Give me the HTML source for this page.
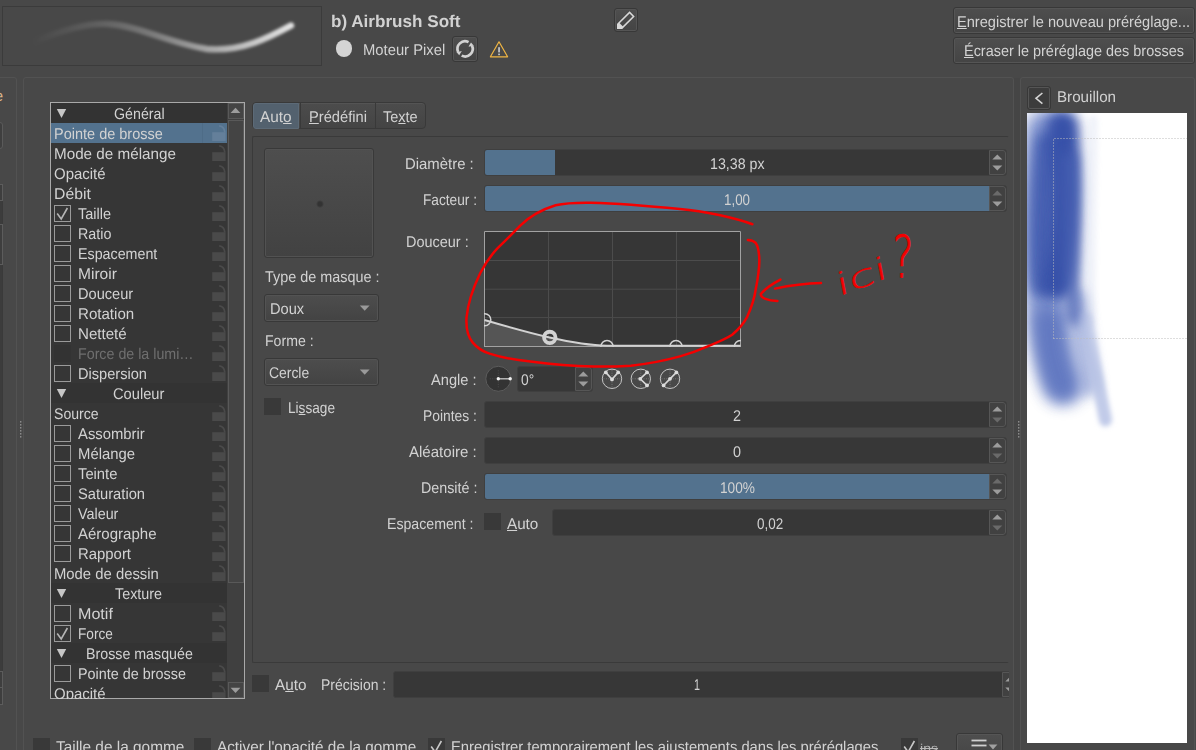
<!DOCTYPE html>
<html lang="fr"><head><meta charset="utf-8"><title>Éditeur de brosses</title>
<style>
html,body{margin:0;padding:0}
body{text-rendering:geometricPrecision;width:1196px;height:750px;overflow:hidden;background:#484848;position:relative;font-family:"Liberation Sans",sans-serif;color:#d2d2d2}
.abs{position:absolute;display:block}
.t{position:absolute;white-space:nowrap;line-height:20px;transform-origin:0 0}
.t2{position:absolute;white-space:nowrap;line-height:20px}
.t u{text-decoration-thickness:1px;text-underline-offset:1.2px}
.frame{position:absolute;box-sizing:border-box;border:1px solid #525252;border-radius:3px}
.cb{width:17px;height:17px;box-sizing:border-box;border:1px solid #9a9a9a}
.chk{position:absolute;width:17px;height:17px;background:#393939}
.sbb{box-sizing:border-box;border:1px solid #595959;background:#444444}
.btn{position:absolute;box-sizing:border-box;border:1px solid #383838;border-radius:3px;background:linear-gradient(#4e4e4e,#444444);box-shadow:inset 0 0 0 1px #555555}
.sl{box-sizing:border-box;border:1px solid #3f3f3f;border-radius:3px;background:#373737;overflow:hidden}
.fill{background:#53728e}
.spn{width:17px;box-sizing:border-box;border:1px solid #565656;border-radius:0 3px 3px 0;background:#414141}
.combo{position:absolute;box-sizing:border-box;border:1px solid #383838;border-radius:3px;background:linear-gradient(#4d4d4d,#434343);box-shadow:inset 0 0 0 1px #535353}
</style></head><body>

<div class="frame" style="left:-6px;top:77px;width:23px;height:700px"></div>
<div class="frame" style="left:23px;top:77px;width:991px;height:700px"></div>
<div class="frame" style="left:1020px;top:77px;width:175px;height:700px"></div>
<div class="abs" style="left:1014px;top:78px;width:6px;height:672px;background:#454545"></div>
<svg class="abs" style="left:19px;top:420px" width="4" height="19" viewBox="0 0 4 19"><rect x="1" y="1" width="1.4" height="1.6" fill="#8a8a8a"/><rect x="1" y="4" width="1.4" height="1.6" fill="#8a8a8a"/><rect x="1" y="7" width="1.4" height="1.6" fill="#8a8a8a"/><rect x="1" y="10" width="1.4" height="1.6" fill="#8a8a8a"/><rect x="1" y="13" width="1.4" height="1.6" fill="#8a8a8a"/><rect x="1" y="16" width="1.4" height="1.6" fill="#8a8a8a"/></svg>
<svg class="abs" style="left:1017px;top:420px" width="4" height="19" viewBox="0 0 4 19"><rect x="1" y="1" width="1.4" height="1.6" fill="#8a8a8a"/><rect x="1" y="4" width="1.4" height="1.6" fill="#8a8a8a"/><rect x="1" y="7" width="1.4" height="1.6" fill="#8a8a8a"/><rect x="1" y="10" width="1.4" height="1.6" fill="#8a8a8a"/><rect x="1" y="13" width="1.4" height="1.6" fill="#8a8a8a"/><rect x="1" y="16" width="1.4" height="1.6" fill="#8a8a8a"/></svg>
<div class="abs" style="left:-6px;top:121.5px;width:9px;height:27px;box-sizing:border-box;border:1px solid #5a5a5a;border-radius:3px;background:#3f3f3f"></div>
<div class="abs" style="left:-6px;top:184px;width:9px;height:521px;box-sizing:border-box;border:1px solid #3a3a3a;background:#3c3c3c"></div>
<div class="abs" style="left:-6px;top:184px;width:9px;height:17px;box-sizing:border-box;border:1px solid #5c5c5c;background:#3e3e3e"></div>
<div class="abs" style="left:-6px;top:224px;width:9px;height:41px;box-sizing:border-box;border:1px solid #5c5c5c;background:#3e3e3e"></div>
<div class="abs" style="left:-6px;top:671px;width:9px;height:17px;box-sizing:border-box;border:1px solid #5c5c5c;background:#3e3e3e"></div>
<div class="abs" style="left:-6px;top:687px;width:9px;height:18px;box-sizing:border-box;border:1px solid #5c5c5c;background:#3e3e3e"></div>
<span class="t2" style="left:-5.5px;top:87px;font-size:15.5px;color:#d8b48a">e</span>
<span class="t2" style="left:-2.5px;top:738px;font-size:15.5px;color:#e8e8e8">.</span>
<svg class="abs" style="left:2px;top:6px" width="320" height="60" viewBox="0 0 320 60">
<defs><linearGradient id="sg" gradientUnits="userSpaceOnUse" x1="30" y1="0" x2="292" y2="0"><stop offset="0" stop-color="#fff" stop-opacity="0"/><stop offset="0.25" stop-color="#fff" stop-opacity="0.13"/><stop offset="0.45" stop-color="#fff" stop-opacity="0.27"/><stop offset="0.7" stop-color="#fff" stop-opacity="0.55"/><stop offset="1" stop-color="#fff" stop-opacity="0.86"/></linearGradient>
<filter id="sb" filterUnits="userSpaceOnUse" x="0" y="0" width="320" height="60"><feGaussianBlur stdDeviation="1.5"/></filter></defs>
<rect x="0.5" y="0.5" width="319" height="59" fill="#484848" stroke="#3b3b3b"/>
<path d="M33 35.5 C60 24 85 17 106 18 C135 19.5 170 38 205 43 C240 46 268 31 289 19.5" fill="none" stroke="url(#sg)" stroke-width="6.4" stroke-linecap="round" filter="url(#sb)"/>
</svg>
<div class="abs" style="left:335.8px;top:40.4px;width:16.6px;height:16.6px;border-radius:50%;background:#d4d4d4"></div>
<div class="btn" style="left:452px;top:36px;width:26px;height:26px"></div>
<svg class="abs" style="left:452px;top:36px" width="26" height="26" viewBox="0 0 26 26"><g fill="none" stroke="#d2d2d2" stroke-width="2.7">
<path d="M19.99 9.64 A7.6 7.6 0 0 1 9.65 19.62"/><path d="M6.21 16.06 A7.6 7.6 0 0 1 16.55 6.08"/></g>
<path d="M18.97 6.56 L16.41 10.78 L21.63 9.4 Z" fill="#d2d2d2"/><path d="M7.23 19.14 L9.79 14.92 L4.57 16.3 Z" fill="#d2d2d2"/></svg>
<svg class="abs" style="left:488px;top:38px" width="22" height="22" viewBox="0 0 22 22"><path d="M11 3.8 L19.6 18.8 L2.4 18.8 Z" fill="none" stroke="#f0b542" stroke-width="1.2" stroke-linejoin="round"/><rect x="10.3" y="9.2" width="1.5" height="5.2" fill="#dcdcdc"/><rect x="10.3" y="15.6" width="1.5" height="1.6" fill="#dcdcdc"/></svg>
<div class="btn" style="left:614px;top:8px;width:24px;height:24px"></div>
<svg class="abs" style="left:614px;top:8px" width="24" height="24" viewBox="0 0 24 24"><path fill-rule="evenodd" fill="#d8d8d8" d="M15.6 3.3 L20.7 8.4 L8.7 20.4 L8.4 21 L3 21 L3 15.9 L3.6 15.3 Z M15.6 5.42 L5.72 15.3 L8.7 18.28 L18.58 8.4 Z"/></svg>
<div class="btn" style="left:953px;top:7px;width:242px;height:27px"></div>
<div class="btn" style="left:953px;top:37px;width:242px;height:27px"></div>
<div class="abs" style="left:50px;top:102px;width:195px;height:597px;box-sizing:border-box;border:1px solid #a9a9a9;background:#363636;overflow:hidden">
<div class="abs" style="left:0;top:0px;width:176px;height:20px;background:#333333"></div>
<svg class="abs" style="left:5px;top:5px" width="12" height="11" viewBox="0 0 12 11"><path d="M0.8 1 L10.2 1 L5.5 10 Z" fill="#c6c6c6"/></svg>
<div class="abs" style="left:0;top:20px;width:176px;height:20px;background:#53728e"></div>
<div class="abs" style="left:151px;top:20px;width:1px;height:20px;background:#4e6c87"></div>
<svg class="abs" style="left:160px;top:21px" width="16" height="18" viewBox="0 0 16 18"><rect x="1.2" y="8.2" width="13.4" height="8.8" fill="#647f9a"/><path d="M8.2 1.8 C12 2.2 13.6 4.6 13.8 8.4" fill="none" stroke="#647f9a" stroke-width="1.8"/></svg>
<svg class="abs" style="left:160px;top:41px" width="16" height="18" viewBox="0 0 16 18"><rect x="1.2" y="8.2" width="13.4" height="8.8" fill="#4a4a4a"/><path d="M8.2 1.8 C12 2.2 13.6 4.6 13.8 8.4" fill="none" stroke="#4a4a4a" stroke-width="1.8"/></svg>
<svg class="abs" style="left:160px;top:61px" width="16" height="18" viewBox="0 0 16 18"><rect x="1.2" y="8.2" width="13.4" height="8.8" fill="#4a4a4a"/><path d="M8.2 1.8 C12 2.2 13.6 4.6 13.8 8.4" fill="none" stroke="#4a4a4a" stroke-width="1.8"/></svg>
<svg class="abs" style="left:160px;top:81px" width="16" height="18" viewBox="0 0 16 18"><rect x="1.2" y="8.2" width="13.4" height="8.8" fill="#4a4a4a"/><path d="M8.2 1.8 C12 2.2 13.6 4.6 13.8 8.4" fill="none" stroke="#4a4a4a" stroke-width="1.8"/></svg>
<div class="abs cb" style="left:3px;top:102px"></div>
<svg class="abs" style="left:3px;top:102px" width="17" height="17" viewBox="0 0 17 17"><path d="M3.2 8.6 L7.2 14 L13.4 3" fill="none" stroke="#b4b4b4" stroke-width="1.6"/></svg>
<svg class="abs" style="left:160px;top:101px" width="16" height="18" viewBox="0 0 16 18"><rect x="1.2" y="8.2" width="13.4" height="8.8" fill="#4a4a4a"/><path d="M8.2 1.8 C12 2.2 13.6 4.6 13.8 8.4" fill="none" stroke="#4a4a4a" stroke-width="1.8"/></svg>
<div class="abs cb" style="left:3px;top:122px"></div>
<svg class="abs" style="left:160px;top:121px" width="16" height="18" viewBox="0 0 16 18"><rect x="1.2" y="8.2" width="13.4" height="8.8" fill="#4a4a4a"/><path d="M8.2 1.8 C12 2.2 13.6 4.6 13.8 8.4" fill="none" stroke="#4a4a4a" stroke-width="1.8"/></svg>
<div class="abs cb" style="left:3px;top:142px"></div>
<svg class="abs" style="left:160px;top:141px" width="16" height="18" viewBox="0 0 16 18"><rect x="1.2" y="8.2" width="13.4" height="8.8" fill="#4a4a4a"/><path d="M8.2 1.8 C12 2.2 13.6 4.6 13.8 8.4" fill="none" stroke="#4a4a4a" stroke-width="1.8"/></svg>
<div class="abs cb" style="left:3px;top:162px"></div>
<svg class="abs" style="left:160px;top:161px" width="16" height="18" viewBox="0 0 16 18"><rect x="1.2" y="8.2" width="13.4" height="8.8" fill="#4a4a4a"/><path d="M8.2 1.8 C12 2.2 13.6 4.6 13.8 8.4" fill="none" stroke="#4a4a4a" stroke-width="1.8"/></svg>
<div class="abs cb" style="left:3px;top:182px"></div>
<svg class="abs" style="left:160px;top:181px" width="16" height="18" viewBox="0 0 16 18"><rect x="1.2" y="8.2" width="13.4" height="8.8" fill="#4a4a4a"/><path d="M8.2 1.8 C12 2.2 13.6 4.6 13.8 8.4" fill="none" stroke="#4a4a4a" stroke-width="1.8"/></svg>
<div class="abs cb" style="left:3px;top:202px"></div>
<svg class="abs" style="left:160px;top:201px" width="16" height="18" viewBox="0 0 16 18"><rect x="1.2" y="8.2" width="13.4" height="8.8" fill="#4a4a4a"/><path d="M8.2 1.8 C12 2.2 13.6 4.6 13.8 8.4" fill="none" stroke="#4a4a4a" stroke-width="1.8"/></svg>
<div class="abs cb" style="left:3px;top:222px"></div>
<svg class="abs" style="left:160px;top:221px" width="16" height="18" viewBox="0 0 16 18"><rect x="1.2" y="8.2" width="13.4" height="8.8" fill="#4a4a4a"/><path d="M8.2 1.8 C12 2.2 13.6 4.6 13.8 8.4" fill="none" stroke="#4a4a4a" stroke-width="1.8"/></svg>
<div class="abs" style="left:3px;top:242px;width:17px;height:17px;background:#333333"></div>
<svg class="abs" style="left:160px;top:241px" width="16" height="18" viewBox="0 0 16 18"><rect x="1.2" y="8.2" width="13.4" height="8.8" fill="#4a4a4a"/><path d="M8.2 1.8 C12 2.2 13.6 4.6 13.8 8.4" fill="none" stroke="#4a4a4a" stroke-width="1.8"/></svg>
<div class="abs cb" style="left:3px;top:262px"></div>
<svg class="abs" style="left:160px;top:261px" width="16" height="18" viewBox="0 0 16 18"><rect x="1.2" y="8.2" width="13.4" height="8.8" fill="#4a4a4a"/><path d="M8.2 1.8 C12 2.2 13.6 4.6 13.8 8.4" fill="none" stroke="#4a4a4a" stroke-width="1.8"/></svg>
<div class="abs" style="left:0;top:280px;width:176px;height:20px;background:#333333"></div>
<svg class="abs" style="left:5px;top:285px" width="12" height="11" viewBox="0 0 12 11"><path d="M0.8 1 L10.2 1 L5.5 10 Z" fill="#c6c6c6"/></svg>
<svg class="abs" style="left:160px;top:301px" width="16" height="18" viewBox="0 0 16 18"><rect x="1.2" y="8.2" width="13.4" height="8.8" fill="#4a4a4a"/><path d="M8.2 1.8 C12 2.2 13.6 4.6 13.8 8.4" fill="none" stroke="#4a4a4a" stroke-width="1.8"/></svg>
<div class="abs cb" style="left:3px;top:322px"></div>
<svg class="abs" style="left:160px;top:321px" width="16" height="18" viewBox="0 0 16 18"><rect x="1.2" y="8.2" width="13.4" height="8.8" fill="#4a4a4a"/><path d="M8.2 1.8 C12 2.2 13.6 4.6 13.8 8.4" fill="none" stroke="#4a4a4a" stroke-width="1.8"/></svg>
<div class="abs cb" style="left:3px;top:342px"></div>
<svg class="abs" style="left:160px;top:341px" width="16" height="18" viewBox="0 0 16 18"><rect x="1.2" y="8.2" width="13.4" height="8.8" fill="#4a4a4a"/><path d="M8.2 1.8 C12 2.2 13.6 4.6 13.8 8.4" fill="none" stroke="#4a4a4a" stroke-width="1.8"/></svg>
<div class="abs cb" style="left:3px;top:362px"></div>
<svg class="abs" style="left:160px;top:361px" width="16" height="18" viewBox="0 0 16 18"><rect x="1.2" y="8.2" width="13.4" height="8.8" fill="#4a4a4a"/><path d="M8.2 1.8 C12 2.2 13.6 4.6 13.8 8.4" fill="none" stroke="#4a4a4a" stroke-width="1.8"/></svg>
<div class="abs cb" style="left:3px;top:382px"></div>
<svg class="abs" style="left:160px;top:381px" width="16" height="18" viewBox="0 0 16 18"><rect x="1.2" y="8.2" width="13.4" height="8.8" fill="#4a4a4a"/><path d="M8.2 1.8 C12 2.2 13.6 4.6 13.8 8.4" fill="none" stroke="#4a4a4a" stroke-width="1.8"/></svg>
<div class="abs cb" style="left:3px;top:402px"></div>
<svg class="abs" style="left:160px;top:401px" width="16" height="18" viewBox="0 0 16 18"><rect x="1.2" y="8.2" width="13.4" height="8.8" fill="#4a4a4a"/><path d="M8.2 1.8 C12 2.2 13.6 4.6 13.8 8.4" fill="none" stroke="#4a4a4a" stroke-width="1.8"/></svg>
<div class="abs cb" style="left:3px;top:422px"></div>
<svg class="abs" style="left:160px;top:421px" width="16" height="18" viewBox="0 0 16 18"><rect x="1.2" y="8.2" width="13.4" height="8.8" fill="#4a4a4a"/><path d="M8.2 1.8 C12 2.2 13.6 4.6 13.8 8.4" fill="none" stroke="#4a4a4a" stroke-width="1.8"/></svg>
<div class="abs cb" style="left:3px;top:442px"></div>
<svg class="abs" style="left:160px;top:441px" width="16" height="18" viewBox="0 0 16 18"><rect x="1.2" y="8.2" width="13.4" height="8.8" fill="#4a4a4a"/><path d="M8.2 1.8 C12 2.2 13.6 4.6 13.8 8.4" fill="none" stroke="#4a4a4a" stroke-width="1.8"/></svg>
<svg class="abs" style="left:160px;top:461px" width="16" height="18" viewBox="0 0 16 18"><rect x="1.2" y="8.2" width="13.4" height="8.8" fill="#4a4a4a"/><path d="M8.2 1.8 C12 2.2 13.6 4.6 13.8 8.4" fill="none" stroke="#4a4a4a" stroke-width="1.8"/></svg>
<div class="abs" style="left:0;top:480px;width:176px;height:20px;background:#333333"></div>
<svg class="abs" style="left:5px;top:485px" width="12" height="11" viewBox="0 0 12 11"><path d="M0.8 1 L10.2 1 L5.5 10 Z" fill="#c6c6c6"/></svg>
<div class="abs cb" style="left:3px;top:502px"></div>
<svg class="abs" style="left:160px;top:501px" width="16" height="18" viewBox="0 0 16 18"><rect x="1.2" y="8.2" width="13.4" height="8.8" fill="#4a4a4a"/><path d="M8.2 1.8 C12 2.2 13.6 4.6 13.8 8.4" fill="none" stroke="#4a4a4a" stroke-width="1.8"/></svg>
<div class="abs cb" style="left:3px;top:522px"></div>
<svg class="abs" style="left:3px;top:522px" width="17" height="17" viewBox="0 0 17 17"><path d="M3.2 8.6 L7.2 14 L13.4 3" fill="none" stroke="#b4b4b4" stroke-width="1.6"/></svg>
<svg class="abs" style="left:160px;top:521px" width="16" height="18" viewBox="0 0 16 18"><rect x="1.2" y="8.2" width="13.4" height="8.8" fill="#4a4a4a"/><path d="M8.2 1.8 C12 2.2 13.6 4.6 13.8 8.4" fill="none" stroke="#4a4a4a" stroke-width="1.8"/></svg>
<div class="abs" style="left:0;top:540px;width:176px;height:20px;background:#333333"></div>
<svg class="abs" style="left:5px;top:545px" width="12" height="11" viewBox="0 0 12 11"><path d="M0.8 1 L10.2 1 L5.5 10 Z" fill="#c6c6c6"/></svg>
<div class="abs cb" style="left:3px;top:562px"></div>
<svg class="abs" style="left:160px;top:561px" width="16" height="18" viewBox="0 0 16 18"><rect x="1.2" y="8.2" width="13.4" height="8.8" fill="#4a4a4a"/><path d="M8.2 1.8 C12 2.2 13.6 4.6 13.8 8.4" fill="none" stroke="#4a4a4a" stroke-width="1.8"/></svg>
<svg class="abs" style="left:160px;top:581px" width="16" height="18" viewBox="0 0 16 18"><rect x="1.2" y="8.2" width="13.4" height="8.8" fill="#4a4a4a"/><path d="M8.2 1.8 C12 2.2 13.6 4.6 13.8 8.4" fill="none" stroke="#4a4a4a" stroke-width="1.8"/></svg>
<div class="abs" style="left:176px;top:0;width:17px;height:595px;background:#404040"></div>
<div class="abs sbb" style="left:177px;top:0;width:16px;height:16px"></div>
<svg class="abs" style="left:179px;top:4px" width="12" height="7" viewBox="0 0 12 7"><path d="M0.6 6 L10.4 6 L5.5 0.8 Z" fill="#9c9c9c"/></svg>
<div class="abs sbb" style="left:177px;top:17px;width:16px;height:463px"></div>
<div class="abs sbb" style="left:177px;top:579px;width:16px;height:16px"></div>
<svg class="abs" style="left:179px;top:584px" width="12" height="7" viewBox="0 0 12 7"><path d="M0.6 0.8 L10.4 0.8 L5.5 6 Z" fill="#9c9c9c"/></svg>
</div>
<div class="abs" style="left:252px;top:102px;width:174px;height:27px;box-sizing:border-box;border:1px solid #393939;border-radius:4px;background:linear-gradient(#4c4c4c,#444444);box-shadow:inset 0 1px 0 #545454;overflow:hidden"><div class="abs" style="left:47px;top:0;width:1px;height:25px;background:#393939"></div><div class="abs" style="left:122px;top:0;width:1px;height:25px;background:#393939"></div></div>
<div class="abs" style="left:252.5px;top:102.5px;width:46.8px;height:26px;box-sizing:border-box;border:1px solid #5c6a77;border-radius:3px 0 0 3px;background:#53616e"></div>
<div class="abs" style="left:252px;top:136px;width:757px;height:527px;box-sizing:border-box;border:1px solid #3a3a3a;border-right-color:transparent;border-radius:2px"></div>
<div class="abs" style="left:264px;top:148px;width:110px;height:110px;box-sizing:border-box;border:1px solid #393939;border-radius:3px;background:linear-gradient(#4e4e4e,#424242);box-shadow:inset 0 0 0 1px #525252"></div>
<div class="abs" style="left:315.5px;top:199.5px;width:8px;height:8px;border-radius:50%;background:radial-gradient(#333 35%,rgba(51,51,51,0) 72%)"></div>
<div class="combo" style="left:264px;top:294px;width:115px;height:28px"></div>
<svg class="abs" style="left:359px;top:305px" width="12" height="7" viewBox="0 0 12 7"><path d="M0.8 0.5 L10.6 0.5 L5.7 5.8 Z" fill="#9a9a9a"/></svg>
<div class="combo" style="left:264px;top:358px;width:115px;height:28px"></div>
<svg class="abs" style="left:359px;top:369px" width="12" height="7" viewBox="0 0 12 7"><path d="M0.8 0.5 L10.6 0.5 L5.7 5.8 Z" fill="#9a9a9a"/></svg>
<div class="chk" style="left:264px;top:398px"></div>
<div class="abs sl" style="left:484px;top:149px;width:523px;height:27px"><div class="abs fill" style="left:0;top:0;width:70px;height:25px"></div><div class="abs spn" style="right:0;top:0;height:25px"></div><svg class="abs" style="right:3px;top:4.2px" width="11" height="6" viewBox="0 0 11 6"><path d="M0.3 5.6 L10.3 5.6 L5.3 0.4 Z" fill="#9c9c9c"/></svg><svg class="abs" style="right:3px;top:14.8px" width="11" height="6" viewBox="0 0 11 6"><path d="M0.3 0.4 L10.3 0.4 L5.3 5.6 Z" fill="#9c9c9c"/></svg></div>
<div class="abs sl" style="left:484px;top:185px;width:523px;height:27px"><div class="abs fill" style="left:0;top:0;width:505px;height:25px"></div><div class="abs spn" style="right:0;top:0;height:25px"></div><svg class="abs" style="right:3px;top:4.2px" width="11" height="6" viewBox="0 0 11 6"><path d="M0.3 5.6 L10.3 5.6 L5.3 0.4 Z" fill="#6a6a6a"/></svg><svg class="abs" style="right:3px;top:14.8px" width="11" height="6" viewBox="0 0 11 6"><path d="M0.3 0.4 L10.3 0.4 L5.3 5.6 Z" fill="#9c9c9c"/></svg></div>
<div class="abs sl" style="left:484px;top:401px;width:523px;height:27px"><div class="abs spn" style="right:0;top:0;height:25px"></div><svg class="abs" style="right:3px;top:4.2px" width="11" height="6" viewBox="0 0 11 6"><path d="M0.3 5.6 L10.3 5.6 L5.3 0.4 Z" fill="#9c9c9c"/></svg><svg class="abs" style="right:3px;top:14.8px" width="11" height="6" viewBox="0 0 11 6"><path d="M0.3 0.4 L10.3 0.4 L5.3 5.6 Z" fill="#6a6a6a"/></svg></div>
<div class="abs sl" style="left:484px;top:437px;width:523px;height:27px"><div class="abs spn" style="right:0;top:0;height:25px"></div><svg class="abs" style="right:3px;top:4.2px" width="11" height="6" viewBox="0 0 11 6"><path d="M0.3 5.6 L10.3 5.6 L5.3 0.4 Z" fill="#9c9c9c"/></svg><svg class="abs" style="right:3px;top:14.8px" width="11" height="6" viewBox="0 0 11 6"><path d="M0.3 0.4 L10.3 0.4 L5.3 5.6 Z" fill="#6a6a6a"/></svg></div>
<div class="abs sl" style="left:484px;top:473px;width:523px;height:27px"><div class="abs fill" style="left:0;top:0;width:505px;height:25px"></div><div class="abs spn" style="right:0;top:0;height:25px"></div><svg class="abs" style="right:3px;top:4.2px" width="11" height="6" viewBox="0 0 11 6"><path d="M0.3 5.6 L10.3 5.6 L5.3 0.4 Z" fill="#6a6a6a"/></svg><svg class="abs" style="right:3px;top:14.8px" width="11" height="6" viewBox="0 0 11 6"><path d="M0.3 0.4 L10.3 0.4 L5.3 5.6 Z" fill="#9c9c9c"/></svg></div>
<div class="chk" style="left:484px;top:513px"></div>
<div class="abs sl" style="left:552px;top:509px;width:455px;height:27px"><div class="abs spn" style="right:0;top:0;height:25px"></div><svg class="abs" style="right:3px;top:4.2px" width="11" height="6" viewBox="0 0 11 6"><path d="M0.3 5.6 L10.3 5.6 L5.3 0.4 Z" fill="#9c9c9c"/></svg><svg class="abs" style="right:3px;top:14.8px" width="11" height="6" viewBox="0 0 11 6"><path d="M0.3 0.4 L10.3 0.4 L5.3 5.6 Z" fill="#6a6a6a"/></svg></div>
<div class="chk" style="left:252px;top:675px"></div>
<div class="abs" style="left:393px;top:671px;width:616px;height:27px;overflow:hidden"><div class="abs sl"  style="left:0px;top:0px;width:627px;height:27px"><div class="abs spn" style="right:0;top:0;height:25px"></div><svg class="abs" style="right:3px;top:4.2px" width="11" height="6" viewBox="0 0 11 6"><path d="M0.3 5.6 L10.3 5.6 L5.3 0.4 Z" fill="#9c9c9c"/></svg><svg class="abs" style="right:3px;top:14.8px" width="11" height="6" viewBox="0 0 11 6"><path d="M0.3 0.4 L10.3 0.4 L5.3 5.6 Z" fill="#9c9c9c"/></svg></div></div>
<svg class="abs" style="left:470px;top:220px" width="290" height="140" viewBox="470 220 290 140">
<defs><clipPath id="cc"><rect x="484" y="231" width="257" height="116"/></clipPath></defs>
<rect x="484" y="231" width="257" height="116" fill="#363636"/>
<g clip-path="url(#cc)">
<path d="M484.5 320 C505 326 528 332.5 549.5 337.5 C570 342 590 345.4 607 345.8 L740.5 345.8 L740.5 347 L484.5 347 Z" fill="#555555"/>
<g stroke="#4c4c4c" stroke-width="1"><path d="M548.5 231V347M612.5 231V347M676.5 231V347M484 260.5H741M484 289.2H741M484 317.6H741"/></g>
<path d="M484.5 347 V231.5 H740.5 V347" fill="none" stroke="#a2a2a2" stroke-width="1"/>
<path d="M484 346.5 H741" fill="none" stroke="#a2a2a2" stroke-width="1"/>
<path d="M484.5 320 C505 326 528 332.5 549.5 337.5 C570 342 590 345.4 607 345.8 L740.5 345.8" fill="none" stroke="#d2d2d2" stroke-width="2"/>
<g fill="none" stroke="#d2d2d2" stroke-width="1.5"><circle cx="484.8" cy="319.8" r="6"/><circle cx="607" cy="346.5" r="6.1"/><circle cx="676" cy="346.5" r="6.1"/><circle cx="740.5" cy="346.5" r="6.1"/></g>
<circle cx="549.8" cy="337.4" r="5.7" fill="none" stroke="#d2d2d2" stroke-width="3.9"/>
</g>
</svg>
<svg class="abs" style="left:480px;top:360px" width="215" height="40" viewBox="480 360 215 40"><circle cx="498.3" cy="378.8" r="12.5" fill="#333333" stroke="#5c5c5c" stroke-width="1"/><rect x="501.0" y="378.3" width="1" height="1" fill="#4b4b4b"/><rect x="494.6" y="378.3" width="1" height="1" fill="#4b4b4b"/><rect x="497.8" y="381.5" width="1" height="1" fill="#4b4b4b"/><rect x="497.8" y="375.1" width="1" height="1" fill="#4b4b4b"/><rect x="503.4" y="378.3" width="1" height="1" fill="#4b4b4b"/><rect x="492.2" y="378.3" width="1" height="1" fill="#4b4b4b"/><rect x="497.8" y="383.9" width="1" height="1" fill="#4b4b4b"/><rect x="497.8" y="372.7" width="1" height="1" fill="#4b4b4b"/><rect x="505.8" y="378.3" width="1" height="1" fill="#4b4b4b"/><rect x="489.8" y="378.3" width="1" height="1" fill="#4b4b4b"/><rect x="497.8" y="386.3" width="1" height="1" fill="#4b4b4b"/><rect x="497.8" y="370.3" width="1" height="1" fill="#4b4b4b"/><path d="M498.3 378.8 H510" stroke="#c8c8c8" stroke-width="1.3"/><circle cx="498.3" cy="378.8" r="1.7" fill="#f0f0f0"/><circle cx="510.2" cy="378.8" r="1.7" fill="#f0f0f0"/><g fill="none" stroke="#c4c4c4" stroke-width="1"><circle cx="612" cy="378.8" r="9.7"/><circle cx="640.8" cy="378.8" r="9.7"/><circle cx="670" cy="378.8" r="9.7"/></g><rect x="614.7" y="378.3" width="1" height="1" fill="#7a7a7a"/><rect x="608.3" y="378.3" width="1" height="1" fill="#7a7a7a"/><rect x="611.5" y="381.5" width="1" height="1" fill="#7a7a7a"/><rect x="611.5" y="375.1" width="1" height="1" fill="#7a7a7a"/><rect x="617.1" y="378.3" width="1" height="1" fill="#7a7a7a"/><rect x="605.9" y="378.3" width="1" height="1" fill="#7a7a7a"/><rect x="611.5" y="383.9" width="1" height="1" fill="#7a7a7a"/><rect x="611.5" y="372.7" width="1" height="1" fill="#7a7a7a"/><rect x="619.5" y="378.3" width="1" height="1" fill="#7a7a7a"/><rect x="603.5" y="378.3" width="1" height="1" fill="#7a7a7a"/><rect x="611.5" y="386.3" width="1" height="1" fill="#7a7a7a"/><rect x="611.5" y="370.3" width="1" height="1" fill="#7a7a7a"/><rect x="643.5" y="378.3" width="1" height="1" fill="#7a7a7a"/><rect x="637.1" y="378.3" width="1" height="1" fill="#7a7a7a"/><rect x="640.3" y="381.5" width="1" height="1" fill="#7a7a7a"/><rect x="640.3" y="375.1" width="1" height="1" fill="#7a7a7a"/><rect x="645.9" y="378.3" width="1" height="1" fill="#7a7a7a"/><rect x="634.7" y="378.3" width="1" height="1" fill="#7a7a7a"/><rect x="640.3" y="383.9" width="1" height="1" fill="#7a7a7a"/><rect x="640.3" y="372.7" width="1" height="1" fill="#7a7a7a"/><rect x="648.3" y="378.3" width="1" height="1" fill="#7a7a7a"/><rect x="632.3" y="378.3" width="1" height="1" fill="#7a7a7a"/><rect x="640.3" y="386.3" width="1" height="1" fill="#7a7a7a"/><rect x="640.3" y="370.3" width="1" height="1" fill="#7a7a7a"/><rect x="672.7" y="378.3" width="1" height="1" fill="#7a7a7a"/><rect x="666.3" y="378.3" width="1" height="1" fill="#7a7a7a"/><rect x="669.5" y="381.5" width="1" height="1" fill="#7a7a7a"/><rect x="669.5" y="375.1" width="1" height="1" fill="#7a7a7a"/><rect x="675.1" y="378.3" width="1" height="1" fill="#7a7a7a"/><rect x="663.9" y="378.3" width="1" height="1" fill="#7a7a7a"/><rect x="669.5" y="383.9" width="1" height="1" fill="#7a7a7a"/><rect x="669.5" y="372.7" width="1" height="1" fill="#7a7a7a"/><rect x="677.5" y="378.3" width="1" height="1" fill="#7a7a7a"/><rect x="661.5" y="378.3" width="1" height="1" fill="#7a7a7a"/><rect x="669.5" y="386.3" width="1" height="1" fill="#7a7a7a"/><rect x="669.5" y="370.3" width="1" height="1" fill="#7a7a7a"/><g stroke="#d6d6d6" stroke-width="1.6" fill="none"><path d="M605.8 372.4 L612 379.4 L618.2 372.4"/><path d="M647 372.4 L640.2 378.8 L647 385.4"/><path d="M663.6 385.4 L676.4 372.4"/></g><g fill="#dcdcdc"><circle cx="605.8" cy="372.4" r="1.9"/><circle cx="618.2" cy="372.4" r="1.9"/><circle cx="612" cy="379.4" r="1.9"/><circle cx="647" cy="372.4" r="1.9"/><circle cx="647" cy="385.4" r="1.9"/><circle cx="640.2" cy="378.8" r="1.9"/><circle cx="663.6" cy="385.4" r="1.9"/><circle cx="676.4" cy="372.4" r="1.9"/><circle cx="670" cy="378.8" r="1.9"/></g></svg><div class="abs sl" style="left:517px;top:366px;width:76px;height:26px"><div class="abs spn" style="right:0;top:0;height:24px"></div><svg class="abs" style="right:3px;top:3.7px" width="11" height="6" viewBox="0 0 11 6"><path d="M0.3 5.6 L10.3 5.6 L5.3 0.4 Z" fill="#9c9c9c"/></svg><svg class="abs" style="right:3px;top:14.3px" width="11" height="6" viewBox="0 0 11 6"><path d="M0.3 0.4 L10.3 0.4 L5.3 5.6 Z" fill="#9c9c9c"/></svg></div>
<div class="btn" style="left:1027px;top:86px;width:24px;height:24px;background:#3c3c3c"></div><svg class="abs" style="left:1027px;top:86px" width="24" height="24" viewBox="1027 86 24 24"><path d="M1042.4 93 L1036 98.3 L1042.4 103.6" fill="none" stroke="#d4d4d4" stroke-width="1.6"/></svg><svg class="abs" style="left:1027px;top:113px" width="160" height="630" viewBox="1027 113 160 630">
<defs><filter id="b8" filterUnits="userSpaceOnUse" x="980" y="60" width="260" height="420"><feGaussianBlur stdDeviation="8"/></filter>
<filter id="b6" filterUnits="userSpaceOnUse" x="980" y="60" width="260" height="420"><feGaussianBlur stdDeviation="6"/></filter>
<filter id="b3" filterUnits="userSpaceOnUse" x="980" y="60" width="260" height="420"><feGaussianBlur stdDeviation="2.6"/></filter>
<linearGradient id="fg" gradientUnits="userSpaceOnUse" x1="0" y1="300" x2="0" y2="426"><stop offset="0" stop-color="#aab7e0" stop-opacity="0.25"/><stop offset="0.6" stop-color="#b4c0e4" stop-opacity="0.8"/><stop offset="1" stop-color="#bec8e8" stop-opacity="0.95"/></linearGradient></defs>
<rect x="1027" y="113" width="160" height="630" fill="#ffffff"/>
<path d="M1046 130 C1040 200 1040 262 1046 300 C1050 340 1056 366 1063 384" fill="none" stroke="#6f85c8" stroke-width="40" stroke-linecap="round" filter="url(#b8)" opacity="0.9"/>
<path d="M1076 300 C1080 335 1084 360 1088 386" fill="none" stroke="#a3b0dc" stroke-width="22" stroke-linecap="round" filter="url(#b6)" opacity="0.8"/>
<path d="M1048 322 C1049 345 1053 366 1062 386" fill="none" stroke="#5f76c0" stroke-width="28" stroke-linecap="round" filter="url(#b8)" opacity="0.9"/>
<path d="M1047 144 C1040 200 1040 262 1043 285" fill="none" stroke="#405aae" stroke-width="24" stroke-linecap="round" filter="url(#b6)" opacity="0.85"/>
<path d="M1063 126 C1067 180 1065 240 1058 283" fill="none" stroke="#3450a8" stroke-width="32" stroke-linecap="round" filter="url(#b6)" opacity="0.97"/>
<path d="M1070 160 C1072 210 1070 260 1074 318" fill="none" stroke="#4660b2" stroke-width="16" stroke-linecap="round" filter="url(#b6)" opacity="0.7"/>
<path d="M1093 120 C1092 200 1090 260 1091 322" fill="none" stroke="#c8d0ea" stroke-width="10" stroke-linecap="round" filter="url(#b3)" opacity="0.25"/>
<path d="M1086 318 C1092 352 1099 388 1105.5 420" fill="none" stroke="url(#fg)" stroke-width="13" stroke-linecap="round" filter="url(#b3)"/>
<path d="M1053.5 338.5 V138.5 H1190" fill="none" stroke="#bdbdbd" stroke-width="1" stroke-dasharray="1 2"/>
<path d="M1053.5 338.5 H1190" fill="none" stroke="#bdbdbd" stroke-width="1" stroke-dasharray="1 2"/>
<rect x="1027" y="339" width="160" height="404" fill="#ffffff" opacity="0"/>
</svg>
<div class="chk" style="left:33px;top:737.5px"></div>
<div class="chk" style="left:194px;top:737.5px"></div>
<div class="chk" style="left:428px;top:737.5px"></div>
<svg class="abs" style="left:428px;top:737.5px" width="17" height="17" viewBox="0 0 17 17"><path d="M3.2 8.6 L7.2 14 L13.4 3" fill="none" stroke="#c8c8c8" stroke-width="1.6"/></svg>
<div class="chk" style="left:901px;top:737.5px"></div>
<svg class="abs" style="left:901px;top:737.5px" width="17" height="17" viewBox="0 0 17 17"><path d="M3.2 8.6 L7.2 14 L13.4 3" fill="none" stroke="#c8c8c8" stroke-width="1.6"/></svg>
<div class="btn" style="left:956px;top:733px;width:47px;height:30px"></div>
<svg class="abs" style="left:956px;top:734px" width="47" height="16" viewBox="0 0 47 16"><rect x="15.5" y="5.6" width="15" height="1.8" fill="#d0d0d0"/><rect x="15.5" y="10.6" width="15" height="1.8" fill="#d0d0d0"/><path d="M32.6 10.6 L41.4 10.6 L37 15.4 Z" fill="#a0a0a0"/></svg>
<svg class="abs" style="left:440px;top:190px" width="500" height="190" viewBox="440 190 500 190">
<g fill="none" stroke="#f40000" stroke-width="2.5" stroke-linecap="round" stroke-linejoin="round">
<path d="M752.4 224.2 C735 218 705 211 680 209 C650 206 620 203.5 590.7 202.7 C575 202.5 565 203 555.6 205.2 C540 210 530 216 520.5 225.3 C512 234 505 241 497.9 247.9 C490 256 485 264 480.3 273 C473 288 468 302 466.5 317.6 C465.8 330 468 337 472.8 342.6 C478 349 484 352 490.4 353.9 C503 358 516 360 530.5 361.5 C550 364 572 366 593.2 366.5 C606 366.8 618 366.5 630.8 365.7 C648 364 665 360.5 680 356.4 C690 353.5 698 350.5 705.2 347.3 C716 343 725 339.5 732.2 334.7 C739 329 744 323 747.3 316.6 C752 306 754.5 298 755.7 289.5 C758 278 759.5 268 759.3 259.4 C759 251 758 246 755.7 242.9 C753.5 240.5 751 240 747.9 239.9"/>
<path d="M821 283 C805 283.4 792 285 775 288.6"/>
<path d="M780.4 279.6 C772 284 765 289 760.8 294 C760.5 298 768 300.5 777.4 301"/>
</g>
<text x="0" y="0" transform="translate(838.5 296.5) rotate(-21) skewX(-10)" font-family="'DejaVu Sans Light','DejaVu Sans',sans-serif" font-weight="200" font-size="30" fill="#f40000" stroke="#f40000" stroke-width="0.35" textLength="54" lengthAdjust="spacingAndGlyphs">ici</text>
<text x="0" y="0" transform="translate(892 277) rotate(1)" font-family="'DejaVu Sans Light','DejaVu Sans',sans-serif" font-weight="200" font-size="58" fill="#f40000" stroke="#f40000" stroke-width="1" textLength="21" lengthAdjust="spacingAndGlyphs">?</text>
</svg>
<span class="t" style="left:113.70px;top:105.00px;font-size:15.5px;color:#d2d2d2;transform:scaleX(0.9174);">Général</span>
<span class="t" style="left:54.40px;top:125.00px;font-size:15.5px;color:#d2d2d2;transform:scaleX(0.9353);">Pointe de brosse</span>
<span class="t" style="left:54.40px;top:145.00px;font-size:15.5px;color:#d2d2d2;transform:scaleX(0.9823);">Mode de mélange</span>
<span class="t" style="left:54.40px;top:165.00px;font-size:15.5px;color:#d2d2d2;transform:scaleX(0.9659);">Opacité</span>
<span class="t" style="left:54.40px;top:185.00px;font-size:15.5px;color:#d2d2d2;transform:scaleX(1.0169);">Débit</span>
<span class="t" style="left:77.80px;top:205.00px;font-size:15.5px;color:#d2d2d2;transform:scaleX(0.9369);">Taille</span>
<span class="t" style="left:77.80px;top:225.00px;font-size:15.5px;color:#d2d2d2;transform:scaleX(0.9230);">Ratio</span>
<span class="t" style="left:77.80px;top:245.00px;font-size:15.5px;color:#d2d2d2;transform:scaleX(0.9203);">Espacement</span>
<span class="t" style="left:77.80px;top:265.00px;font-size:15.5px;color:#d2d2d2;transform:scaleX(1.0039);">Miroir</span>
<span class="t" style="left:77.80px;top:285.00px;font-size:15.5px;color:#d2d2d2;transform:scaleX(0.9421);">Douceur</span>
<span class="t" style="left:77.80px;top:305.00px;font-size:15.5px;color:#d2d2d2;transform:scaleX(0.9734);">Rotation</span>
<span class="t" style="left:77.80px;top:325.00px;font-size:15.5px;color:#d2d2d2;transform:scaleX(0.9743);">Netteté</span>
<span class="t" style="left:78.00px;top:345.00px;font-size:15.5px;color:#6f6f6f;transform:scaleX(0.9192);">Force de la lumi…</span>
<span class="t" style="left:77.80px;top:365.00px;font-size:15.5px;color:#d2d2d2;transform:scaleX(0.9422);">Dispersion</span>
<span class="t" style="left:113.30px;top:385.00px;font-size:15.5px;color:#d2d2d2;transform:scaleX(0.9469);">Couleur</span>
<span class="t" style="left:54.40px;top:405.00px;font-size:15.5px;color:#d2d2d2;transform:scaleX(0.9079);">Source</span>
<span class="t" style="left:77.80px;top:425.00px;font-size:15.5px;color:#d2d2d2;transform:scaleX(0.9561);">Assombrir</span>
<span class="t" style="left:77.80px;top:445.00px;font-size:15.5px;color:#d2d2d2;transform:scaleX(0.9585);">Mélange</span>
<span class="t" style="left:77.80px;top:465.00px;font-size:15.5px;color:#d2d2d2;transform:scaleX(0.9523);">Teinte</span>
<span class="t" style="left:77.80px;top:485.00px;font-size:15.5px;color:#d2d2d2;transform:scaleX(0.9480);">Saturation</span>
<span class="t" style="left:77.80px;top:505.00px;font-size:15.5px;color:#d2d2d2;transform:scaleX(0.9254);">Valeur</span>
<span class="t" style="left:77.80px;top:525.00px;font-size:15.5px;color:#d2d2d2;transform:scaleX(0.9689);">Aérographe</span>
<span class="t" style="left:77.80px;top:545.00px;font-size:15.5px;color:#d2d2d2;transform:scaleX(0.9609);">Rapport</span>
<span class="t" style="left:54.40px;top:565.00px;font-size:15.5px;color:#d2d2d2;transform:scaleX(0.9576);">Mode de dessin</span>
<span class="t" style="left:115.45px;top:585.00px;font-size:15.5px;color:#d2d2d2;transform:scaleX(0.9264);">Texture</span>
<span class="t" style="left:77.80px;top:605.00px;font-size:15.5px;color:#d2d2d2;transform:scaleX(1.0389);">Motif</span>
<span class="t" style="left:77.80px;top:625.00px;font-size:15.5px;color:#d2d2d2;transform:scaleX(0.8808);">Force</span>
<span class="t" style="left:85.60px;top:645.00px;font-size:15.5px;color:#d2d2d2;transform:scaleX(0.9182);">Brosse masquée</span>
<span class="t" style="left:77.80px;top:665.00px;font-size:15.5px;color:#d2d2d2;transform:scaleX(0.9275);">Pointe de brosse</span>
<span class="t" style="left:54.40px;top:685.00px;font-size:15.5px;color:#d2d2d2;clip-path:inset(0 0 6px 0);transform:scaleX(0.9659);">Opacité</span>
<span class="t" style="left:331.30px;top:12.00px;font-size:17px;color:#d2d2d2;font-weight:bold;transform:scaleX(1.0058);">b) Airbrush Soft</span>
<span class="t" style="left:363.20px;top:41.00px;font-size:15.5px;color:#d2d2d2;transform:scaleX(0.9541);">Moteur Pixel</span>
<span class="t" style="left:957.10px;top:13.00px;font-size:15.5px;color:#d2d2d2;transform:scaleX(0.9422);"><u>E</u>nregistrer le nouveau préréglage...</span>
<span class="t" style="left:964.40px;top:42.00px;font-size:15.5px;color:#d2d2d2;transform:scaleX(0.9315);"><u>É</u>craser le préréglage des brosses</span>
<span class="t" style="left:1056.70px;top:88.00px;font-size:15.5px;color:#d2d2d2;transform:scaleX(0.9782);">Brouillon</span>
<span class="t" style="left:260.20px;top:108.00px;font-size:15.5px;color:#d2d2d2;transform:scaleX(0.9909);">Aut<u>o</u></span>
<span class="t" style="left:308.60px;top:108.00px;font-size:15.5px;color:#d2d2d2;transform:scaleX(0.9479);"><u>P</u>rédéfini</span>
<span class="t" style="left:383.00px;top:108.00px;font-size:15.5px;color:#d2d2d2;transform:scaleX(0.9363);">Te<u>x</u>te</span>
<span class="t" style="left:264.60px;top:268.00px;font-size:15.5px;color:#d2d2d2;transform:scaleX(0.9284);">Type de masque :</span>
<span class="t" style="left:269.90px;top:300.00px;font-size:15.5px;color:#d2d2d2;transform:scaleX(0.9451);">Doux</span>
<span class="t" style="left:264.60px;top:332.00px;font-size:15.5px;color:#d2d2d2;transform:scaleX(0.9100);">Forme :</span>
<span class="t" style="left:269.40px;top:364.00px;font-size:15.5px;color:#d2d2d2;transform:scaleX(0.8974);">Cercle</span>
<span class="t" style="left:287.80px;top:399.00px;font-size:15.5px;color:#d2d2d2;transform:scaleX(0.8793);">Li<u>s</u>sage</span>
<span class="t" style="left:404.60px;top:155.00px;font-size:15.5px;color:#d2d2d2;transform:scaleX(0.9608);">Diamètre :</span>
<span class="t" style="left:423.00px;top:191.00px;font-size:15.5px;color:#d2d2d2;transform:scaleX(0.8828);">Facteur :</span>
<span class="t" style="left:405.60px;top:233.00px;font-size:15.5px;color:#d2d2d2;transform:scaleX(0.9330);">Douceur :</span>
<span class="t" style="left:431.40px;top:371.00px;font-size:15.5px;color:#d2d2d2;transform:scaleX(0.9448);">Angle :</span>
<span class="t" style="left:423.10px;top:407.00px;font-size:15.5px;color:#d2d2d2;transform:scaleX(0.8937);">Pointes :</span>
<span class="t" style="left:409.30px;top:443.00px;font-size:15.5px;color:#d2d2d2;transform:scaleX(0.9700);">Aléatoire :</span>
<span class="t" style="left:420.60px;top:479.00px;font-size:15.5px;color:#d2d2d2;transform:scaleX(0.9220);">Densité :</span>
<span class="t" style="left:386.80px;top:515.00px;font-size:15.5px;color:#d2d2d2;transform:scaleX(0.9126);">Espacement :</span>
<span class="t" style="left:507.20px;top:515.00px;font-size:15.5px;color:#d2d2d2;transform:scaleX(0.9810);"><u>A</u>uto</span>
<span class="t" style="left:709.75px;top:155.00px;font-size:15.5px;color:#d2d2d2;transform:scaleX(0.9164);">13,38 px</span>
<span class="t" style="left:724.00px;top:191.00px;font-size:15.5px;color:#d2d2d2;transform:scaleX(0.8617);">1,00</span>
<span class="t" style="left:520.70px;top:371.00px;font-size:15.5px;color:#d2d2d2;transform:scaleX(0.8902);">0°</span>
<span class="t" style="left:733.00px;top:407.00px;font-size:15.5px;color:#d2d2d2;transform:scaleX(0.9275);">2</span>
<span class="t" style="left:733.00px;top:443.00px;font-size:15.5px;color:#d2d2d2;transform:scaleX(0.9275);">0</span>
<span class="t" style="left:719.50px;top:479.00px;font-size:15.5px;color:#d2d2d2;transform:scaleX(0.8826);">100%</span>
<span class="t" style="left:757.40px;top:515.00px;font-size:15.5px;color:#d2d2d2;transform:scaleX(0.8684);">0,02</span>
<span class="t" style="left:275.40px;top:676.00px;font-size:15.5px;color:#d2d2d2;transform:scaleX(0.9873);">A<u>u</u>to</span>
<span class="t" style="left:320.60px;top:676.00px;font-size:15.5px;color:#d2d2d2;transform:scaleX(0.9009);">Précision :</span>
<span class="t" style="left:694.00px;top:676.00px;font-size:15.5px;color:#d2d2d2;transform:scaleX(0.6957);">1</span>
<span class="t" style="left:56.20px;top:738.00px;font-size:15.5px;color:#d2d2d2;transform:scaleX(0.9935);">Taille de la gomme</span>
<span class="t" style="left:217.40px;top:738.00px;font-size:15.5px;color:#d2d2d2;transform:scaleX(0.9867);">Activer l'opacité de la gomme</span>
<span class="t" style="left:451.20px;top:738.00px;font-size:15.5px;color:#d2d2d2;transform:scaleX(0.9522);">Enregistrer temporairement les ajustements dans les préréglages</span>
<span class="t" style="left:920.00px;top:739.00px;font-size:11.5px;color:#b8b8b8;transform:scaleX(1.2242);"><s>ins</s></span>
</body></html>
